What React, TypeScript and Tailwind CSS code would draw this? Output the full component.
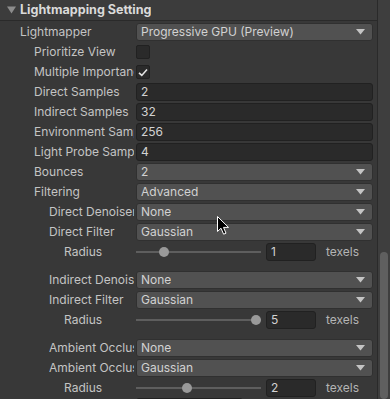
import React from "react";

type Row =
  | { kind: "dropdown"; label: string; level: number; value: string }
  | { kind: "check"; label: string; level: number; checked: boolean }
  | { kind: "int"; label: string; level: number; value: string }
  | { kind: "slider"; label: string; level: number; value: number }
  | { kind: "space" };

const ROWS: Row[] = [
  { kind: "dropdown", label: "Lightmapper", level: 0, value: "Progressive GPU (Preview)" },
  { kind: "check", label: "Prioritize View", level: 1, checked: false },
  { kind: "check", label: "Multiple Importance Sampling", level: 1, checked: true },
  { kind: "int", label: "Direct Samples", level: 1, value: "2" },
  { kind: "int", label: "Indirect Samples", level: 1, value: "32" },
  { kind: "int", label: "Environment Samples", level: 1, value: "256" },
  { kind: "int", label: "Light Probe Sample Multiplier", level: 1, value: "4" },
  { kind: "dropdown", label: "Bounces", level: 1, value: "2" },
  { kind: "dropdown", label: "Filtering", level: 1, value: "Advanced" },
  { kind: "dropdown", label: "Direct Denoiser", level: 2, value: "None" },
  { kind: "dropdown", label: "Direct Filter", level: 2, value: "Gaussian" },
  { kind: "slider", label: "Radius", level: 3, value: 1 },
  { kind: "space" },
  { kind: "dropdown", label: "Indirect Denoiser", level: 2, value: "None" },
  { kind: "dropdown", label: "Indirect Filter", level: 2, value: "Gaussian" },
  { kind: "slider", label: "Radius", level: 3, value: 5 },
  { kind: "space" },
  { kind: "dropdown", label: "Ambient Occlusion Denoiser", level: 2, value: "None" },
  { kind: "dropdown", label: "Ambient Occlusion Filter", level: 2, value: "Gaussian" },
  { kind: "slider", label: "Radius", level: 3, value: 2 },
];

// label indent per nesting level
const INDENT = ["pl-[20px]", "pl-[34px]", "pl-[49px]", "pl-[64px]"];

function Arrow() {
  return (
    <svg width="9" height="6" viewBox="0 0 9 6" className="shrink-0">
      <path d="M0 0 H9 L4.5 5.5 Z" fill="#c4c4c4" />
    </svg>
  );
}

function Dropdown({ value }: { value: string }) {
  return (
    <div className="flex h-[18px] flex-1 items-center justify-between rounded-[3px] border border-[#303030] bg-[#515151] pl-[4px] pr-[7px] text-[#d2d2d2]">
      <span className="truncate">{value}</span>
      <Arrow />
    </div>
  );
}

function Checkbox({ checked }: { checked: boolean }) {
  return (
    <div className="flex h-[14px] w-[14px] items-center justify-center rounded-[2px] border border-[#212121] bg-[#2a2a2a]">
      {checked && (
        <svg width="10" height="9" viewBox="0 0 10 9">
          <path d="M1 4.8 L3.8 7.4 L9 1.4" stroke="#e4e4e4" strokeWidth="1.6" fill="none" />
        </svg>
      )}
    </div>
  );
}

function IntField({ value, className }: { value: string; className?: string }) {
  return (
    <div
      className={`flex h-[18px] items-center rounded-[3px] border border-[#212121] bg-[#2a2a2a] pl-[4px] text-[#d2d2d2] ${className ?? "flex-1"}`}
    >
      {value}
    </div>
  );
}

function Slider({ value }: { value: number }) {
  // thumb center travels 5px..120px along a 125px track, range 0..5
  const left = 5 + (value / 5) * 115;
  return (
    <div className="flex flex-1 items-center">
      <div className="relative h-[18px] w-[125px]">
        <div className="absolute left-0 right-0 top-[8px] h-[2px] bg-[#5e5e5e]" />
        <div
          className="absolute top-[4px] h-[10px] w-[10px] rounded-full bg-[#999999]"
          style={{ left: left - 5 }}
        />
      </div>
      <IntField value={String(value)} className="ml-[5px] w-[50px]" />
      <span className="ml-[10px] text-[#b4b4b4]">texels</span>
    </div>
  );
}

function Field({ row }: { row: Row }) {
  if (row.kind === "dropdown") return <Dropdown value={row.value} />;
  if (row.kind === "check") return <Checkbox checked={row.checked} />;
  if (row.kind === "int") return <IntField value={row.value} />;
  if (row.kind === "slider") return <Slider value={row.value} />;
  return null;
}

export default function App() {
  return (
    <div
      className="relative flex h-[399px] w-[390px] overflow-hidden bg-[#383838] text-[12px] leading-[14px] text-[#c4c4c4]"
      style={{ fontFamily: "Inter, 'Noto Sans', sans-serif" }}
    >
      {/* Inspector content */}
      <div className="flex w-[377px] flex-col">
        {/* Foldout header */}
        <div className="flex h-[21px] shrink-0 items-center border-b border-[#2a2a2a] bg-[#3c3c3c]">
          <svg width="10" height="8" viewBox="0 0 10 8" className="ml-[7px] mr-[3px]">
            <path d="M0 0.5 H9 L4.5 7.5 Z" fill="#8c8c8c" />
          </svg>
          <div className="w-[131px] overflow-hidden whitespace-nowrap text-[12.6px] font-bold text-[#dadada]">
            Lightmapping Settings
          </div>
        </div>

        <div className="flex flex-col pt-[1px]">
          {ROWS.map((row, i) =>
            row.kind === "space" ? (
              <div key={i} className="h-[8px] shrink-0" />
            ) : (
              <div key={i} className="flex h-[20px] shrink-0 items-center pr-[4px]">
                <div className={`mr-[2px] w-[134px] shrink-0 overflow-hidden ${INDENT[row.level]}`}>
                  <div className="overflow-hidden whitespace-nowrap">{row.label}</div>
                </div>
                <Field row={row} />
              </div>
            )
          )}
          {/* next row, cut off by the window */}
          <div className="flex h-[20px] shrink-0 items-start pr-[4px]">
            <div className="w-[136px] shrink-0" />
            <IntField value="" className="w-[107px]" />
          </div>
        </div>
      </div>

      {/* Scrollbar */}
      <div className="flex w-[13px] flex-col border-l border-[#2a2a2a] bg-[#3e3e3e] pl-[2px] pr-[2px]">
        <div className="mt-[252px] h-[170px] w-[8px] rounded-[4px] bg-[#5f5f5f]" />
      </div>

      {/* Mouse cursor */}
      <svg
        width="13"
        height="20"
        viewBox="0 0 13 20"
        className="pointer-events-none absolute left-[217px] top-[216px]"
      >
        <path
          d="M0.5 0.5 L0.5 15.5 L4 12.2 L6.6 18.2 L9 17.2 L6.5 11.4 L11.5 11.4 Z"
          fill="#000000"
          stroke="#ffffff"
          strokeWidth="1"
          strokeLinejoin="round"
        />
      </svg>
    </div>
  );
}
